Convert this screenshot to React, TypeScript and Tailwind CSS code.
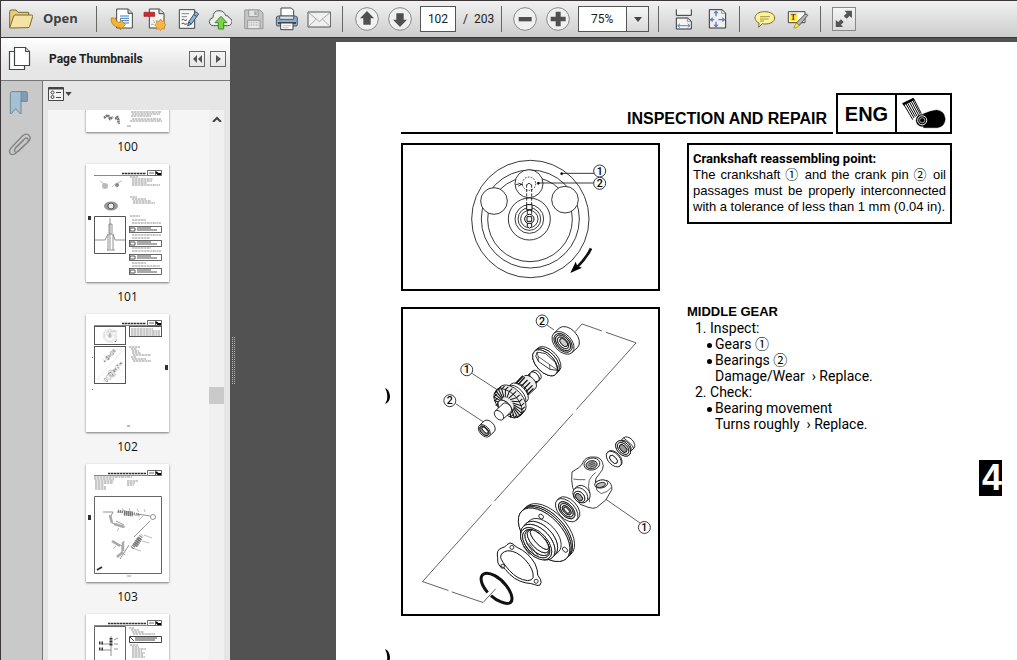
import React, { useState } from "react";

interface IconProps {
    children: React.ReactNode;
    className?: string;
}

const Icon = ({ children, className = "h-6 w-6" }: IconProps) => (
    <svg viewBox="0 0 72 72" className={className} fill="none" stroke="#444" strokeWidth="3" strokeLinejoin="round" aria-hidden="true">
        {children}
    </svg>
);

const FolderIcon = () => (
    <Icon>
        <path d="M2 62V13q0-4 4-4h15l6 7h32v10" fill="#e6cf7c" stroke="#7b6630" />
        <path d="M2 63 14 27q1-3 4-3h50q4 0 3 4L62 58q-1 4-5 4Z" fill="#f3e3a4" stroke="#7b6630" />
    </Icon>
);

const ExportIcon = () => (
    <Icon>
        <path d="M23 6h35l12 12v45H23Z" fill="#fff" />
        <path d="M57 6v13h13" fill="#ccc" />
        <path d="M33 27h27M33 34h27M33 41h27M42 48h18" stroke="#3c78c0" />
        <path d="M6 33h14q0 13 14 13V36l15 17-15 16V61Q6 62 6 33Z" fill="#f3b632" stroke="#a9731a" strokeWidth="2" />
    </Icon>
);

const CreateIcon = () => (
    <Icon>
        <path d="M22 6h30l14 13v44H22Z" fill="#f4f4f4" />
        <path d="M51 6v14h14" fill="#ddd" />
        <rect x="6" y="16" width="32" height="12" fill="#d8262f" stroke="#8d1d24" strokeWidth="2" />
        <path d="M34 40q4 3 3 8M27 52h8" stroke="#aaa" />
        <path d="m56 36 4 7 8-2-1 8 6 5-6 4 1 8-8-1-4 6-5-6-8 2 1-8-6-5 6-5-1-8 8 2Z" fill="#f7b64a" stroke="#c47d20" strokeWidth="2" />
    </Icon>
);

const EditIcon = () => (
    <Icon>
        <path d="M13 8h46v56H13Z" fill="#f7f7f7" />
        <path d="M20 20h22M20 29h16" stroke="#888" />
        <path d="M20 39q7-4 8 0t8-1M20 50q5-4 7 0t10 0" stroke="#444" />
        <path d="M62 14 71 21 49 51 38 57 41 45Z" fill="#8eb5d6" stroke="#36526e" />
        <path d="m41 45 8 6M57 23l9 6" stroke="#36526e" />
    </Icon>
);

const CloudIcon = () => (
    <Icon>
        <path d="M17 56Q4 55 4 44q0-10 11-12Q15 11 33 11q15 0 20 15 8-2 11 7 9 3 8 11-1 12-14 12Z" fill="#eee" stroke="#555" />
        <path d="M39 28 57 47H47V66H31V47H21Z" fill="#82cf48" stroke="#3a8d22" />
    </Icon>
);

const SaveIcon = () => (
    <Icon>
        <path d="M11 9h46l9 9v47H11Z" fill="#c4c4c4" stroke="#999" />
        <path d="M23 9h28v20H23Z" fill="#e2e2e2" stroke="#999" />
        <path d="M40 13h7v11h-7Z" fill="#aaa" stroke="none" />
        <path d="M20 40h37v25H20Z" fill="#e6e6e6" stroke="#999" />
        <path d="M25 47h27M25 54h27" stroke="#aaa" strokeDasharray="3 2" />
    </Icon>
);

const PrintIcon = () => (
    <Icon>
        <path d="M21 30V3h31l7 7v20Z" fill="#fff" />
        <path d="M7 33q0-6 6-6h50q7 0 7 6v20q0 4-4 4H11q-4 0-4-4Z" fill="#8fadc4" stroke="#4c5a66" />
        <path d="M17 27h42v10H17Z" fill="#dce6ee" stroke="#4c5a66" />
        <path d="M12 48h54" stroke="#2e3942" strokeWidth="5" />
        <path d="M20 48h37v20H20Z" fill="#fff" />
        <path d="M26 56h25M26 62h18" stroke="#999" strokeWidth="2" />
    </Icon>
);

const MailIcon = () => (
    <Icon>
        <rect x="3" y="15" width="68" height="45" fill="#f0f0f0" stroke="#555" />
        <path d="m4 16 33 28L70 16M4 59l24-23M70 59 46 36" stroke="#888" strokeWidth="2" />
    </Icon>
);

const RoundIcon = ({ d }: { d: string }) => (
    <Icon>
        <circle cx="36" cy="36" r="34" fill="#f0f0f0" stroke="#888" />
        <path d={d} fill="#505050" stroke="none" />
    </Icon>
);

const FitWidthIcon = () => (
    <Icon>
        <path d="M16 7v18h45V7" fill="#f4f4f4" stroke="#333" />
        <path d="M16 33h34l11 10v23H16Z" fill="#f4f4f4" stroke="#333" />
        <path d="M49 33v10h11" stroke="#666" strokeWidth="2" />
        <path d="M20 56h36M27 50l-7 6 7 6M50 50l7 6-7 6" stroke="#5c7fb8" />
    </Icon>
);

const FitPageIcon = () => (
    <Icon>
        <path d="M16 8h38l11 10v45H16Z" fill="#f0f0f0" stroke="#333" />
        <path d="M53 8v11h11" stroke="#666" strokeWidth="2" />
        <path d="M36 13v15M36 44v14M19 38h12M43 38h18" stroke="#5c7fb8" strokeWidth="4" />
        <path d="m36 10 8 9H28ZM36 62l8-9H28ZM17 38l9-8v16ZM64 38l-9-8v16Z" fill="#5c7fb8" stroke="none" />
    </Icon>
);

const CommentIcon = () => (
    <Icon>
        <path d="M38 14c18 0 30 8 30 19S56 51 38 51q-4 0-7-1L20 61l1-13C13 44 9 39 9 33c0-11 11-19 29-19Z" fill="#fbf39a" stroke="#7c6c2d" />
        <path d="M24 29h30M24 36h26M24 42h12" stroke="#a7984a" />
    </Icon>
);

const HighlightIcon = () => (
    <Icon>
        <rect x="10" y="14" width="50" height="33" fill="#f9f9f9" />
        <rect x="14" y="18" width="22" height="25" fill="#ffe93c" stroke="none" />
        <text x="17" y="38" fontSize="22" fontWeight="700" fontFamily="Liberation Serif, serif" fill="#333" stroke="none">T</text>
        <path d="M60 22q6-3 8 3L43 55l-9-7Z" fill="#b8b8b8" stroke="#555" />
        <path d="m34 48 9 7-8 7-9 1Z" fill="#ffe93c" stroke="#8f7d22" strokeWidth="2" />
    </Icon>
);

const ExpandIcon = () => (
    <Icon>
        <path d="M62 9v24l-8-7-9 9-10-9 10-9-7-8ZM9 62V39l8 7 9-9 9 9-9 9 7 7Z" fill="#555" stroke="none" />
    </Icon>
);

interface ToolButtonProps {
    label: string;
    children: React.ReactNode;
    onClick?: () => void;
}

const ToolButton = ({ label, children, onClick }: ToolButtonProps) => (
    <button type="button" aria-label={label} onClick={onClick} className="flex h-[34px] w-[33px] shrink-0 items-center justify-center">
        {children}
    </button>
);

const Separator = () => <div className="mx-[7px] h-[26px] w-px shrink-0 bg-[#666]" />;

const ZOOM_LEVELS = ["50%", "75%", "100%", "125%"];

interface ToolbarProps {
    page: number;
    setPage: (page: number) => void;
}

const Toolbar = ({ page, setPage }: ToolbarProps) => {
    const [zoom, setZoom] = useState("75%");

    const stepZoom = (by: number) => {
        const next = ZOOM_LEVELS[ZOOM_LEVELS.indexOf(zoom) + by];
        if (next) setZoom(next);
    };

    return (
        <header className="flex h-[38px] shrink-0 items-center border-y border-l border-[#3a3639] bg-linear-to-b from-[#f1f1f1] to-[#cdcdcd] text-xs text-[#222]">
            <button type="button" className="ml-2 flex w-20 shrink-0 items-center gap-[10px] text-[13px] font-bold text-[#3f3f3f]">
                <FolderIcon />
                Open
            </button>
            <Separator />
            <ToolButton label="Export file"><ExportIcon /></ToolButton>
            <ToolButton label="Create PDF"><CreateIcon /></ToolButton>
            <ToolButton label="Edit"><EditIcon /></ToolButton>
            <ToolButton label="Upload"><CloudIcon /></ToolButton>
            <ToolButton label="Save"><SaveIcon /></ToolButton>
            <ToolButton label="Print"><PrintIcon /></ToolButton>
            <ToolButton label="Email"><MailIcon /></ToolButton>
            <Separator />
            <ToolButton label="Previous page" onClick={() => setPage(page - 1)}>
                <RoundIcon d="M36 12 57 34H47V53H25V34H15Z" />
            </ToolButton>
            <ToolButton label="Next page" onClick={() => setPage(page + 1)}>
                <RoundIcon d="M36 60 57 38H47V19H25V38H15Z" />
            </ToolButton>
            <input
                aria-label="Page number"
                value={page}
                onChange={(e) => setPage(Number(e.target.value) || 0)}
                className="ml-1 h-[26px] w-9 shrink-0 border border-[#555] bg-white text-center font-['Roboto',sans-serif] outline-none"
            />
            <span className="ml-[7px] w-[38px] shrink-0 font-['Roboto',sans-serif] whitespace-pre">/  203</span>
            <div className="mr-[6px] h-[26px] w-px shrink-0 bg-[#666]" />
            <ToolButton label="Zoom out" onClick={() => stepZoom(-1)}>
                <RoundIcon d="M17 30H56V43H17Z" />
            </ToolButton>
            <ToolButton label="Zoom in" onClick={() => stepZoom(1)}>
                <RoundIcon d="M29 14H44V29H59V43H44V58H29V43H14V29H29Z" />
            </ToolButton>
            <div className="relative mr-[2px] ml-1 h-[26px] w-[71px] shrink-0">
                <select
                    aria-label="Zoom level"
                    value={zoom}
                    onChange={(e) => setZoom(e.target.value)}
                    className="h-full w-full appearance-none border border-[#555] bg-white pl-3 font-['Roboto',sans-serif] outline-none"
                >
                    {ZOOM_LEVELS.map((z) => (
                        <option key={z}>{z}</option>
                    ))}
                </select>
                <span className="pointer-events-none absolute inset-y-px right-px flex w-[22px] items-center justify-center border-l border-[#555] bg-linear-to-b from-[#f6f6f6] to-[#d9d9d9]">
                    <svg viewBox="0 0 8 5" className="h-[5px] w-2" aria-hidden="true"><path d="M0 0h8L4 5Z" fill="#444" /></svg>
                </span>
            </div>
            <Separator />
            <ToolButton label="Fit width"><FitWidthIcon /></ToolButton>
            <ToolButton label="Fit page"><FitPageIcon /></ToolButton>
            <Separator />
            <ToolButton label="Add comment"><CommentIcon /></ToolButton>
            <ToolButton label="Highlight text"><HighlightIcon /></ToolButton>
            <Separator />
            <button type="button" aria-label="Read mode" className="ml-1 flex h-6 w-6 shrink-0 items-center justify-center border border-[#888] bg-linear-to-b from-[#f4f4f4] to-[#dcdcdc]">
                <ExpandIcon />
            </button>
        </header>
    );
};

const Callout = ({ x, y, n }: { x: number; y: number; n: number }) => (
    <g>
        <circle cx={x} cy={y} r="18" fill="#fff" strokeWidth="2.5" />
        <text x={x} y={y + 11} textAnchor="middle" fontSize="32" fontWeight="500" fontFamily="Roboto, sans-serif" fill="#000" stroke="none">
            {n}
        </text>
    </g>
);

interface FigureProps {
    labels?: boolean;
    className?: string;
    x?: number;
    y?: number;
    width?: number;
    height?: number;
}

const CrankFigure = ({ labels = true, ...rest }: FigureProps) => (
    <svg viewBox="39 165 765 432" fill="none" stroke="#111" strokeWidth="2.5" {...rest}>
        <circle cx="421" cy="387" r="176" />
        <circle cx="421" cy="387" r="147" />
        <circle cx="420" cy="388" r="127" />
        <circle cx="418" cy="387" r="63" fill="#fff" />
        <circle cx="312" cy="333" r="40" fill="#fff" />
        <circle cx="525" cy="329" r="40" fill="#fff" />
        <circle cx="417" cy="281" r="42" fill="#fff" />
        <circle cx="417" cy="281" r="20" strokeDasharray="5 4" />
        <path d="M410 284v60M425 284v60M377 283h22" strokeDasharray="9 4" />
        <path d="m385 279 10 4-10 5M409 287q8-14 16 0" />
        <circle cx="418" cy="387" r="43" />
        <circle cx="418" cy="387" r="34" />
        <circle cx="418" cy="387" r="26" />
        <circle cx="418" cy="387" r="14" strokeWidth="3" />
        <path d="M411 380h14v14h-14ZM410 344h16v15h-16ZM412 400h13v9l-6 6-7-6Z" fill="#fff" strokeWidth="3" />
        <path d="M412 359v14M425 359v14" />
        <path d="M515 250h100M445 279h168" />
        <circle cx="515" cy="251" r="3" fill="#000" />
        <circle cx="445" cy="280" r="3" fill="#000" />
        <path d="M603 475q-13 28-42 57" strokeWidth="8" />
        <path d="m541 549 16-34 5 14 14 4Z" fill="#000" stroke="none" />
        {labels && <Callout x={629} y={243} n={1} />}
        {labels && <Callout x={629} y={280} n={2} />}
    </svg>
);

interface DiscProps {
    x: number;
    y: number;
    rx: number;
    ry: number;
    d?: number;
    fill?: string;
}

// Short cylinder seen at 45 degrees, extruded by d towards the upper right
const Disc = ({ x, y, rx, ry, d = 0, fill = "#fff" }: DiscProps) => (
    <g transform={`translate(${x} ${y}) rotate(47)`}>
        <ellipse cx="0" cy={-d} rx={rx} ry={ry} fill={fill} />
        <path d={`M${-rx} 0V${-d}H${rx}V0Z`} fill={fill} stroke="none" />
        <path d={`M${-rx} 0V${-d}M${rx} ${-d}V0`} />
        <ellipse cx="0" cy="0" rx={rx} ry={ry} fill={fill} />
    </g>
);

const GEAR_TEETH = Array.from({ length: 22 }, (_, i) => (i * Math.PI) / 11);

const GearFigure = ({ labels = true, ...rest }: FigureProps) => (
    <svg viewBox="24 24 768 918" fill="none" stroke="#111" strokeWidth="2.5" {...rest}>
        <path d="m543 92 20-23 60 21m12 4 91 32L546 327m-10 12L299 603m-9 10L83 845l78 27m10 4 94 32 38-41" strokeWidth="2" />
        <path d="m457 72 22 15M232 218l80 52M182 309l84 55M635 597l105 73" strokeWidth="2" />

        {/* bearing */}
        <Disc x={506} y={126} rx={40} ry={26} d={22} />
        <Disc x={506} y={126} rx={33} ry={21} />
        <Disc x={506} y={126} rx={28} ry={17} fill="#ddd" />
        <Disc x={506} y={126} rx={21} ry={12} />
        <Disc x={508} y={125} rx={15} ry={8} fill="#ccc" />

        {/* lock ring */}
        <Disc x={452} y={186} rx={47} ry={27} d={14} />
        <Disc x={455} y={183} rx={47} ry={27} />
        <Disc x={457} y={181} rx={47} ry={27} />
        <Disc x={452} y={186} rx={47} ry={27} />
        <path d="m424 166 4-12 25 4 30 27 8 24-24-3-35-24Z" />
        <path d="m428 154 3 13 34 24 26 18M431 167l1 15M465 191l2 15" strokeWidth="2" />

        {/* pinion shaft */}
        <Disc x={408} y={240} rx={17} ry={11} d={25} />
        <Disc x={412} y={236} rx={17} ry={11} />
        <Disc x={416} y={232} rx={17} ry={11} />
        <Disc x={420} y={228} rx={17} ry={11} />
        <Disc x={380} y={269} rx={25} ry={14} d={36} fill="#eee" />
        <path d="m362 249 23-24M367 255l24-25M374 263l25-25M382 270l25-25M390 278l24-24M395 285l22-22" strokeWidth="4" />
        <Disc x={367} y={282} rx={35} ry={18} d={10} />
        <Disc x={340} y={308} rx={52} ry={31} d={17} fill="#eee" />
        <g transform="translate(340 308) rotate(47)">
            {GEAR_TEETH.map((a) => (
                <path
                    key={a}
                    d={`M${22 * Math.cos(a)} ${12 * Math.sin(a)}L${52 * Math.cos(a + 0.25)} ${31 * Math.sin(a + 0.25)}v-12`}
                    strokeWidth="3"
                />
            ))}
        </g>
        <Disc x={331} y={320} rx={26} ry={15} />
        <Disc x={313} y={344} rx={17} ry={11} d={33} />

        {/* small bearing */}
        <Disc x={269} y={391} rx={22} ry={14} d={20} />
        <Disc x={269} y={391} rx={17} ry={10} fill="#999" />
        <Disc x={271} y={389} rx={12} ry={5} />

        {/* nut and washer */}
        <Disc x={693} y={438} rx={22} ry={14} d={15} />
        <path d="m688 412 10 8 17 16 4 10" />
        <Disc x={687} y={444} rx={27} ry={18} />
        <Disc x={687} y={444} rx={21} ry={13} />
        <Disc x={687} y={444} rx={14} ry={8} fill="#999" />
        <Disc x={659} y={476} rx={28} ry={17} d={3} />
        <Disc x={658} y={477} rx={15} ry={8} />

        {/* yoke */}
        <path d="M535 562q-5-24-2-47l20-13q12-8 15-20 6-11 20-12h18q19 4 21 26 0 12-8 20l-13 17q-3 6-2 13 18-10 36-5 14 8 13 27l-18 31-28 23q-10 5-26-1l-24-9Z" fill="#fff" />
        <path d="M537 536q14 3 36 2M604 516q-14 12-19 24-6 20 2 38M604 540q0 18 4 30l13 10q20-4 30-18M571 568l13 10 2 28" strokeWidth="2" />
        <ellipse cx="593" cy="491" rx="24" ry="18" fill="#fff" transform="rotate(-12 593 491)" />
        <ellipse cx="592" cy="493" rx="17" ry="12" fill="#aaa" transform="rotate(-12 592 493)" />
        <path d="m582 492 16-8M583 497l19-9M588 501l16-8" strokeWidth="2" />
        <ellipse cx="621" cy="551" rx="20" ry="12" fill="#fff" transform="rotate(-12 621 551)" />
        <ellipse cx="620" cy="554" rx="14" ry="7" fill="#bbb" transform="rotate(-12 620 554)" />
        <Disc x={558} y={585} rx={26} ry={19} d={10} />
        <Disc x={555} y={590} rx={19} ry={14} />
        <Disc x={554} y={591} rx={13} ry={8} fill="#999" />

        {/* oil seal */}
        <Disc x={517} y={630} rx={42} ry={25} d={8} />
        <Disc x={517} y={630} rx={31} ry={18} fill="#ccc" />
        <Disc x={517} y={630} rx={24} ry={14} />
        <Disc x={517} y={630} rx={17} ry={9} fill="#aaa" />
        <Disc x={517} y={630} rx={11} ry={5} />

        {/* bearing housing */}
        <Disc x={450} y={703} rx={98} ry={54} d={18} />
        <Disc x={457} y={696} rx={98} ry={54} />
        <Disc x={453} y={700} rx={98} ry={54} />
        <Disc x={449} y={704} rx={98} ry={54} />
        <ellipse cx="440" cy="649" rx="8" ry="6" transform="rotate(45 440 649)" />
        <ellipse cx="512" cy="749" rx="9" ry="6" transform="rotate(45 512 749)" />
        <Disc x={434} y={722} rx={64} ry={38} d={20} />
        <Disc x={438} y={717} rx={64} ry={38} />
        <Disc x={430} y={726} rx={64} ry={38} />
        <Disc x={425} y={731} rx={58} ry={34} />
        <Disc x={425} y={731} rx={51} ry={29} />
        <Disc x={428} y={728} rx={47} ry={25} />
        <Disc x={431} y={724} rx={43} ry={20} />
        <Disc x={435} y={719} rx={38} ry={13} />
        <path d="m386 738 19 26M390 732l21 32M396 729l25 37M403 729l28 38" strokeWidth="2" />

        {/* gasket */}
        <path d="M309 773q-5-24 12-29 11-2 16-10 9-10 19-2 5 6 12 10 34 15 54 50 8 18 8 34l8 12q5 10-2 18-8 2-16-2-10-4-26-5-36-7-62-41-4-7-16-9-9-8-7-26Z" fill="#fff" strokeWidth="3" />
        <path d="M318 772q0-16 22-20 26 0 52 27 27 30 24 54-3 9-17 9-30-3-54-30-25-28-27-40Z" strokeWidth="3" />
        <circle cx="352" cy="742" r="6" />
        <circle cx="324" cy="799" r="6" />
        <circle cx="425" cy="844" r="6" />

        {/* o-ring */}
        <path d="M279 878c-22-26-25-49-12-56 17-9 50 11 68 35 20 26 22 48 9 53-12 4-36-6-55-23" strokeWidth="9" />

        {labels && (
            <>
                <Callout x={443} y={60} n={2} />
                <Callout x={216} y={207} n={1} />
                <Callout x={165} y={300} n={2} />
                <Callout x={751} y={682} n={1} />
            </>
        )}
    </svg>
);

const EngineMark = ({ className }: { className?: string }) => (
    <svg viewBox="0 0 156 114" className={className} fill="none" stroke="#000" aria-hidden="true">
        <path d="m18 30 27 46M24 27l25 44M29 25l24 42M35 22l23 43M40 19l23 43M45 16l22 42M49 14l22 43" strokeWidth="3" />
        <path d="m14 29 35-17" strokeWidth="8" />
        <path d="M78 58q22-10 40-12 26 3 27 28-1 23-24 27H78Z" fill="#000" />
        <circle cx="74" cy="78" r="19" fill="#000" />
        <circle cx="74" cy="78" r="14" stroke="#fff" strokeWidth="3" />
        <circle cx="74" cy="78" r="8" stroke="#fff" strokeWidth="2" />
    </svg>
);

// Rows of small print: x, y, length
const Print = ({ rows }: { rows: number[][] }) => (
    <g stroke="#777" strokeWidth="0.8" strokeDasharray="2 0.5 3 0.6">
        {rows.map(([x, y, w]) => (
            <path key={`${x}-${y}`} d={`M${x} ${y}h${w}`} />
        ))}
    </g>
);

const ThumbHeader = ({ from }: { from: number }) => (
    <g>
        <path d="M8 11.5h53" stroke="#555" strokeWidth="0.7" />
        <path d={`M${from} 9.5H60`} stroke="#333" strokeWidth="1.4" strokeDasharray="2 0.5 3 0.5" />
        <path d="M61.5 6.5h14v5h-14Zm8 0v5" stroke="#444" strokeWidth="0.8" fill="none" />
        <path d="M63 9h5" stroke="#666" />
        <path d="m70 8 2 2h3" stroke="#000" strokeWidth="1.8" fill="none" />
    </g>
);

const Thumb100 = () => (
    <g>
        <path d="m18 104 4-3 2 4 3-2M29 104l3 1 1 5M31 102l2 5" stroke="#777" strokeWidth="2.4" fill="none" strokeDasharray="2 0.5" />
        <Print rows={[[45, 98, 30], [46, 100, 28], [45, 102, 20], [46, 105, 29], [44, 107, 32]]} />
        <path d="M41 112h4" stroke="#999" />
    </g>
);

const Thumb101 = () => (
    <g>
        <ThumbHeader from={36} />
        <ellipse cx="19" cy="22" rx="3" ry="3" fill="#bbb" />
        <path d="m14 17 4 3m8 3 3-3m2-1 5-2" stroke="#999" strokeWidth="0.6" />
        <ellipse cx="31" cy="21" rx="2" ry="2" fill="#888" />
        <ellipse cx="25" cy="42" rx="7" ry="4.5" fill="#999" />
        <ellipse cx="25" cy="42" rx="3" ry="3" fill="#eee" stroke="#555" />
        <path d="M8.5 52.5h31v37h-31Z" fill="#fff" stroke="#555" />
        <path d="M9 76h10l3-6v16M39 76H29l-2-6v16M24 54v31M23 60h3v10h-3ZM21 86h8" stroke="#777" strokeWidth="0.8" fill="none" />
        <path d="M2 52h3v4H2Z" fill="#333" />
        <Print rows={[[44, 13, 8], [46, 15, 21], [46, 17, 20], [46, 19, 15], [46, 21, 28], [44, 33, 7], [46, 35, 14], [47, 37, 18], [47, 39, 22], [44, 52, 10], [46, 56, 14], [46, 59, 29], [46, 71, 29], [46, 74, 18], [46, 84, 19], [46, 87, 29], [46, 99, 14], [46, 102, 28]]} />
        {[62, 76, 90, 104].map((y) => (
            <g key={y}>
                <rect x="43.5" y={y + 0.5} width="32" height="6" fill="#fff" stroke="#444" strokeWidth="0.8" />
                <path d={`M44 ${y + 2}h5v3h-5ZM51 ${y + 2}h14M51 ${y + 4}h20`} stroke="#555" fill="none" />
            </g>
        ))}
    </g>
);

const Thumb102 = () => (
    <g>
        <ThumbHeader from={36} />
        <rect x="8.5" y="12.5" width="31" height="18" fill="#fff" stroke="#555" />
        <CrankFigure labels={false} x={9} y={13} width={30} height={17} />
        <rect x="8.5" y="32.5" width="31" height="37" fill="#fff" stroke="#555" />
        <GearFigure labels={false} x={9} y={33} width={30} height={36} />
        <rect x="43.5" y="12.5" width="32" height="10" fill="#fff" stroke="#555" />
        <Print rows={[[45, 15, 22], [45, 17, 29], [45, 19, 29], [45, 21, 29], [43, 33, 11], [45, 35, 6], [46, 37, 7], [46, 39, 9], [47, 41, 18], [45, 43, 5], [46, 45, 14], [47, 47, 18]]} />
        <path d="M79 51h3v5h-3Z" fill="#333" />
        <path d="M41 112h3M6.500 43v1M6.500 75v1" stroke="#777" />
    </g>
);

const Thumb103 = () => (
    <g>
        <ThumbHeader from={22} />
        <Print rows={[[8, 13, 38], [8, 15, 20], [9, 17, 19], [9, 19, 18], [9, 21, 9], [9, 23, 11], [9, 25, 11], [41, 17, 11], [41, 19, 8], [41, 21, 7]]} />
        <path d="M8.500 32.500h67v77h-67Z" stroke="#666" fill="none" />
        <g stroke="#777" strokeWidth="0.8" fill="none">
            <path d="M17 48h10l-3 6 2 5 4 1 9 3m-9-6 8 4M31 48h6m14 2 13 2M64 57 48 73M43 81l-9 14M27 77l9 5 2-5m-2 5v6l3 3" />
            <circle cx="67" cy="53" r="2.500" />
            <path d="m32 47 22 4" strokeWidth="3" strokeDasharray="1 1" />
            <path d="m38 49 9 1" strokeWidth="5" strokeDasharray="1.500 0.500" />
            <path d="m46 84 10-13" strokeWidth="4" strokeDasharray="1 1" />
            <path d="m49 82 5-8" strokeWidth="5" strokeDasharray="1.500 0.500" />
            <path d="m24 51 2 8M28 60l10 3M26 77l8 5M37 78v9M31 93l6-5" strokeWidth="2.500" stroke="#aaa" />
            <path d="m36 44 2 3m5-3 1 3m7-2 2 3m5-3 1 3M27 85l3-3m16 2 9 3m1-10 7 2m-5-8 8 3M33 64l-2 3M53 56l4-4" strokeWidth="0.5" />
        </g>
        <path d="m11 106 5-3" stroke="#333" strokeWidth="2" />
        <path d="M2 51h3v5H2Z" fill="#333" />
        <path d="M41 112h4" stroke="#999" />
    </g>
);

const Thumb104 = () => (
    <g>
        <ThumbHeader from={22} />
        <path d="M8.500 12.500h31v70h-31Z" stroke="#666" fill="none" />
        <path d="M25 22v20M15 30h10M15 36h10" stroke="#777" strokeWidth="0.8" />
        <path d="M25 24v8M13 29h4M13 35h4" stroke="#333" strokeWidth="3" strokeDasharray="1 0.500" />
        <path d="m28 26 4-2m-4 6h4m-4 5h4" stroke="#777" strokeWidth="0.8" />
        <Print rows={[[43, 14, 5], [45, 16, 8], [46, 18, 12], [47, 20, 22], [44, 31, 8], [46, 33, 7], [46, 35, 14], [46, 37, 10], [46, 39, 13], [46, 41, 11], [46, 43, 13]]} />
        <path d="M43.500 22.500h32v6h-32ZM44 23l4 4M49 24h22M49 26h20" stroke="#444" fill="none" />
    </g>
);

const THUMBNAILS = [
    { page: 100, drawing: <Thumb100 /> },
    { page: 101, drawing: <Thumb101 /> },
    { page: 102, drawing: <Thumb102 /> },
    { page: 103, drawing: <Thumb103 /> },
    { page: 104, drawing: <Thumb104 /> },
];

const BookmarkIcon = () => (
    <Icon>
        <path d="M29 5h29q3 0 3 4v25H40" fill="#7f9db4" stroke="#6f8798" />
        <path d="M10 74V10q0-5 5-5h32q-5 1-5 6v63L26 56Z" fill="#a6c0d3" stroke="#6f8798" />
    </Icon>
);

const ClipIcon = () => (
    <Icon>
        <path d="M24 49 52 21q7-6 11 0 3 5-3 11L26 64q-9 7-16 1-6-8 2-17L46 12q11-10 20-2 8 9-2 19L34 58q-6 5-10 1-4-5 2-11l25-25" stroke="#848484" strokeWidth="4" />
    </Icon>
);

const PagesIcon = () => (
    <svg viewBox="0 0 24 26" className="h-[26px] w-6" fill="#fff" stroke="#444" strokeWidth="1.2" aria-hidden="true">
        <path d="M1.500 5.500h15v18h-15Z" />
        <path d="M6.500 1.500h11l4 4v14h-15Z" />
        <path d="M17.500 1.500v4h4" fill="#ccc" strokeWidth="1" />
    </svg>
);

const Sidebar = ({ page, setPage }: ToolbarProps) => (
    <aside className="flex w-[230px] shrink-0 flex-col border-l border-[#3a3639] bg-[#e6e6e6]">
        <div className="flex h-[43px] shrink-0 items-center border-b border-[#777] bg-linear-to-b from-white to-[#e6e6e6] to-70%">
            <button type="button" aria-label="Page thumbnails" className="ml-[7px] w-[41px]">
                <PagesIcon />
            </button>
            <h2 className="flex-1 font-['Roboto',sans-serif] text-xs font-bold whitespace-nowrap text-[#222]">Page Thumbnails</h2>
            <button type="button" aria-label="Collapse panel" className="mr-[5px] flex h-4 w-4 items-center justify-center border border-[#666]">
                <svg viewBox="0 0 10 8" className="h-2 w-[10px]" aria-hidden="true"><path d="M5 0v8L1 4ZM10 0v8L6 4Z" fill="#555" /></svg>
            </button>
            <button type="button" aria-label="Expand panel" className="mr-1 flex h-4 w-4 items-center justify-center border border-[#666]">
                <svg viewBox="0 0 5 8" className="h-2 w-[5px]" aria-hidden="true"><path d="M0 0v8l5-4Z" fill="#555" /></svg>
            </button>
        </div>
        <div className="flex min-h-0 flex-1">
            <nav className="flex w-[42px] shrink-0 flex-col items-center gap-[18px] border-r border-[#777] bg-[#c9c9c9] pt-2 pr-[6px]">
                <button type="button" aria-label="Bookmarks" className="h-[25px]"><BookmarkIcon /></button>
                <button type="button" aria-label="Attachments" className="h-6"><ClipIcon /></button>
            </nav>
            <div className="flex min-w-0 flex-1 flex-col pl-[5px]">
                <button type="button" aria-label="Options" className="flex h-[29px] shrink-0 items-center gap-px pb-[3px]">
                    <svg viewBox="0 0 16 16" className="h-4 w-4" fill="none" stroke="#444" aria-hidden="true">
                        <path d="M.5 1.500h15v13H.5Z" fill="#f4f4f4" />
                        <path d="M.5 2.500h15" strokeWidth="2" />
                        <circle cx="4.500" cy="6.500" r="1.500" />
                        <circle cx="4.500" cy="11" r="1.500" />
                        <path d="M8 6.500h5M8 11.500h5" />
                    </svg>
                    <svg viewBox="0 0 8 5" className="h-1 w-[7px]" aria-hidden="true"><path d="M0 0h8L4 5Z" fill="#444" /></svg>
                </button>
                <div className="flex min-h-0 flex-1 pr-[6px]">
                    <ul className="-mr-px min-h-0 flex-1 overflow-hidden border-r border-white bg-[#f5f5f5]">
                        {THUMBNAILS.map((t, i) => (
                            <li key={t.page} className={i === 0 ? "-mt-24 h-[150px]" : "h-[150px]"}>
                                <button
                                    type="button"
                                    aria-current={t.page === page}
                                    onClick={() => setPage(t.page)}
                                    className="flex w-full flex-col items-center pr-[2px]"
                                >
                                    <svg viewBox="0 0 83 118" className="h-[118px] w-[83px] bg-white shadow-[0_1px_2px_#777]" aria-hidden="true">
                                        {t.drawing}
                                    </svg>
                                    <span className="mt-[7px] text-xs leading-4 text-[#111]">{t.page}</span>
                                </button>
                            </li>
                        ))}
                    </ul>
                    <div className="flex w-[15px] shrink-0 flex-col items-center bg-[#f0f0f0]">
                        <svg viewBox="0 0 10 6" className="mt-[6px] h-[6px] w-[10px]" aria-hidden="true">
                            <path d="m1 6 4-4 4 4" fill="none" stroke="#444" strokeWidth="2" />
                        </svg>
                        <div className="mt-[265px] h-[17px] w-full bg-[#cacaca]" />
                    </div>
                </div>
            </div>
        </div>
    </aside>
);

const Splitter = () => (
    <div className="flex w-[106px] shrink-0 items-center pt-[24px] pl-[2px]">
        <svg viewBox="0 0 4 48" className="h-12 w-1" stroke="#bbb" strokeDasharray="1 1" aria-hidden="true">
            <path d="M.5 0v48M2.500 0v48" />
        </svg>
    </div>
);

const PunchHole = () => (
    <svg viewBox="0 0 5 18" className="h-[18px] w-[5px]" aria-hidden="true">
        <path d="M0 1q4 1 5 8 0 6-5 8l2-4q1-7-2-12Z" />
    </svg>
);

const Bullet = () => <span className="mr-[3px] inline-block h-[5px] w-[5px] rounded-full bg-black align-middle" />;

const DocumentPage = () => (
    <article className="flex flex-1 items-start bg-white font-['Liberation_Sans','Noto_Sans_CJK_JP',sans-serif] text-black">
        <div className="flex w-[65px] shrink-0 flex-col gap-[243px] pt-[345px] pl-[49px]">
            <PunchHole />
            <PunchHole />
        </div>
        <div className="max-w-[551px] flex-1 pt-[51px]">
            <div className="flex items-end gap-[3px]">
                <h1 className="flex-1 border-b-2 border-black pr-[6px] pb-[3px] text-right text-base leading-5 font-bold">
                    INSPECTION AND REPAIR
                </h1>
                <div className="flex h-[41px] w-[116px] border-2 border-black">
                    <div className="flex w-[59px] items-center justify-center border-r-2 border-black text-xl font-bold">ENG</div>
                    <EngineMark className="h-[37px] w-[53px]" />
                </div>
            </div>
            <div className="mt-[9px] grid grid-cols-[259fr_265fr] items-start gap-x-[27px] gap-y-4">
                <figure className="border-2 border-black">
                    <CrankFigure className="block w-full" />
                </figure>
                <section className="border-2 border-black px-1 pt-[6px] pb-[7px] text-[13px] leading-4">
                    <h2 className="font-['Roboto',sans-serif] font-bold">Crankshaft reassembling point:</h2>
                    <p className="text-justify">
                        The crankshaft ① and the crank pin ② oil passages must be properly interconnected with a tolerance of less than 1 mm (0.04 in).
                    </p>
                </section>
                <figure className="border-2 border-black">
                    <GearFigure className="block w-full" />
                </figure>
                <section className="-mt-[3px] font-['Roboto','Noto_Sans_CJK_JP',sans-serif] text-sm leading-4">
                    <h2 className="font-['Liberation_Sans',sans-serif] text-[13px] leading-4 font-bold">MIDDLE GEAR</h2>
                    <ol className="pl-2">
                        <li>
                            1. Inspect:
                            <ul className="pl-3">
                                <li><Bullet />Gears ①</li>
                                <li><Bullet />Bearings ②</li>
                                <li className="pl-2">Damage/Wear &nbsp;› Replace.</li>
                            </ul>
                        </li>
                        <li>
                            2. Check:
                            <ul className="pl-3">
                                <li><Bullet />Bearing movement</li>
                                <li className="pl-2">Turns roughly &nbsp;› Replace.</li>
                            </ul>
                        </li>
                    </ol>
                </section>
            </div>
        </div>
        <div className="mt-[418px] ml-[27px] h-9 w-[23px] shrink-0 bg-black pl-[3px] text-4xl leading-9 font-bold text-white">
            4
        </div>
    </article>
);

export default function App() {
    const [page, setPage] = useState(102);

    return (
        <div className="flex h-screen flex-col overflow-hidden bg-[#525252] font-['Open_Sans',sans-serif]">
            <Toolbar page={page} setPage={setPage} />
            <div className="flex min-h-0 flex-1">
                <Sidebar page={page} setPage={setPage} />
                <Splitter />
                <main className="mt-1 flex min-w-0 flex-1 overflow-hidden">
                    <DocumentPage />
                </main>
            </div>
        </div>
    );
}
